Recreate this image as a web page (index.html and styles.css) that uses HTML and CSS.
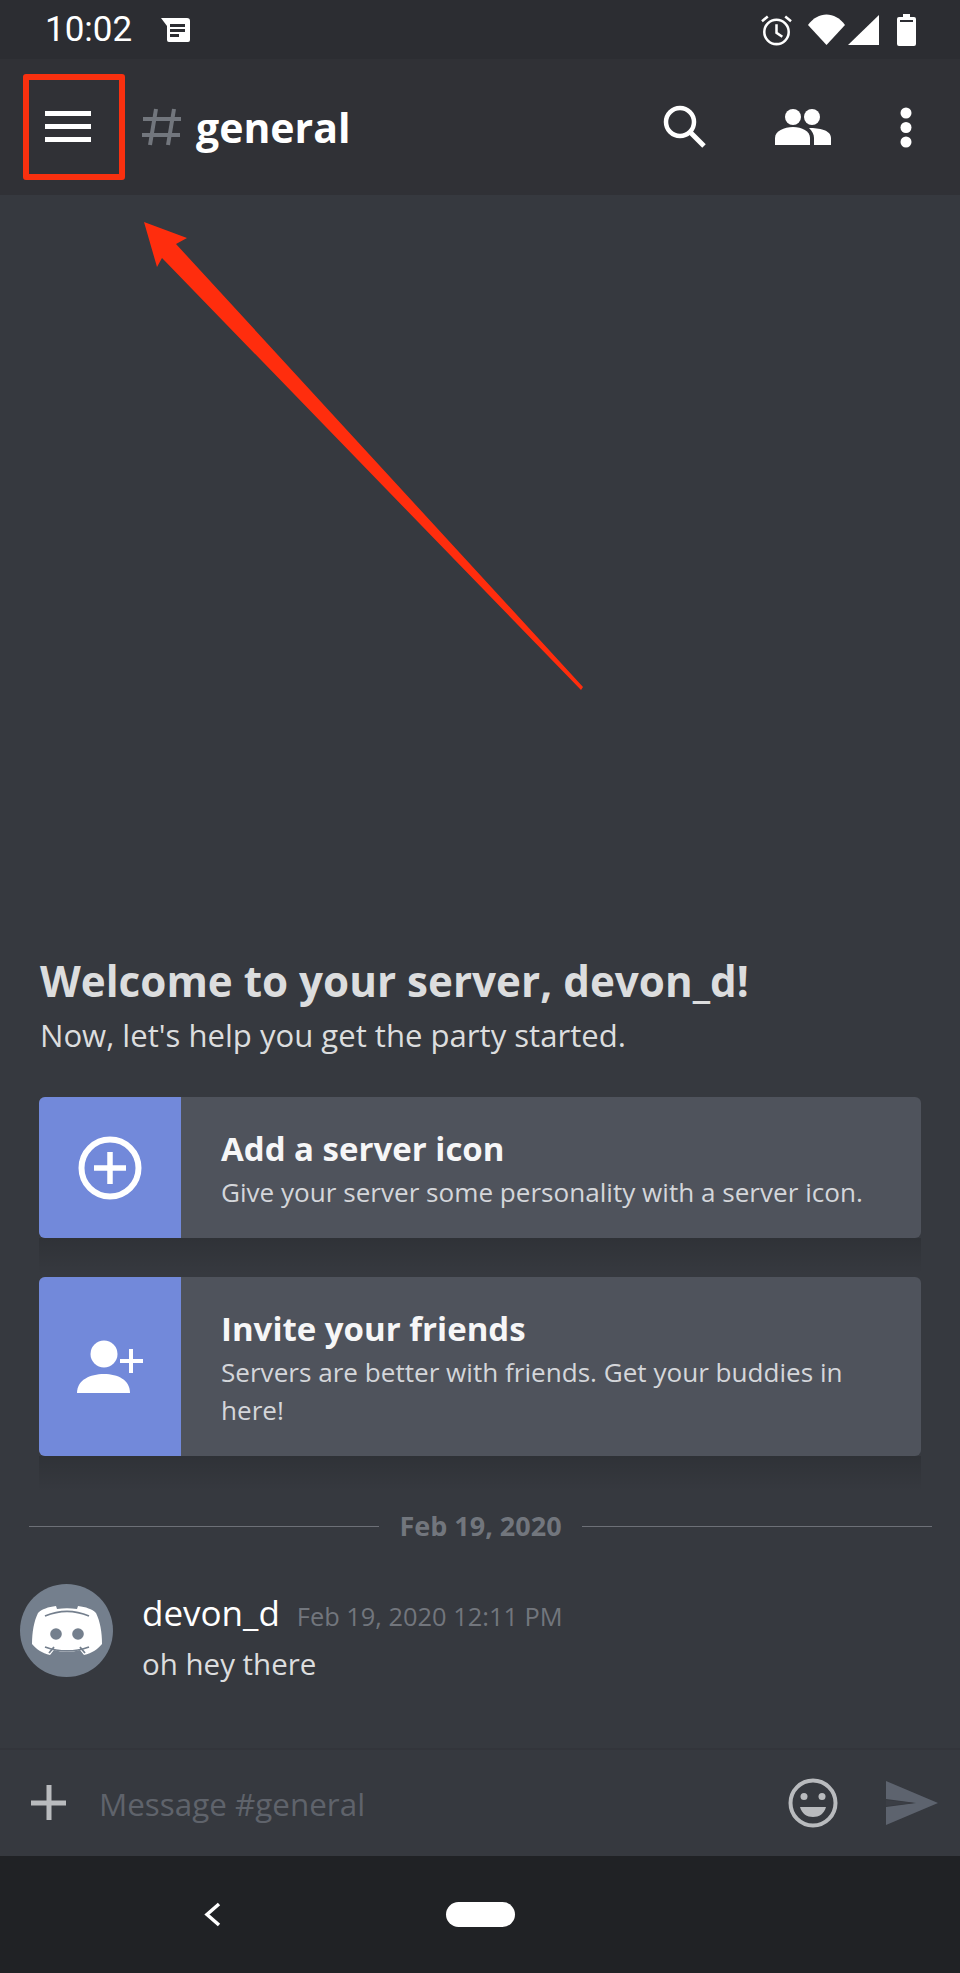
FILE: index.html
```html
<!DOCTYPE html>
<html lang="en">
<head>
    <meta charset="UTF-8">
    <title>general</title>
    <link rel="stylesheet" href="styles.css">
</head>
<body>

<div class="status-bar">
    <span class="clock">10:02</span>
    <svg class="note-icon" width="32" height="26" viewBox="0 0 32 26"><path fill="#fff" d="M2 1h26a3 3 0 0 1 3 3v19a2 2 0 0 1-2 2H10a2 2 0 0 1-2-2V9z"/><path fill="#2c2d32" d="M11 7h15v3H11zM11 12h15v3H11zM11 17h9v3h-9z"/></svg>
    <span class="spacer"></span>
    <svg width="31" height="33" viewBox="0 0 32 33"><g fill="none" stroke="#fff" stroke-width="2.6"><circle cx="16" cy="19" r="12.600"/><path d="M16 11v9l6 4M1 8l6-5M31 8l-6-5"/></g></svg>
    <svg class="wifi-icon" width="37" height="31" viewBox="0 0 37 31"><path fill="#fff" d="M0 11C10 -3 27 -3 37 11L18.500 31z"/></svg>
    <svg class="signal-icon" width="31" height="30" viewBox="0 0 31 30"><path fill="#fff" d="M31 0v30H0z"/></svg>
    <svg class="battery-icon" width="19" height="32" viewBox="0 0 19 32"><path fill="#fff" d="M6 0h7v3h4a2 2 0 0 1 2 2v25a2 2 0 0 1-2 2H2a2 2 0 0 1-2-2V5a2 2 0 0 1 2-2h4z"/><path fill="#2c2d32" d="M3 6h13v2H3z"/></svg>
</div>

<header class="top-bar">
    <button class="menu-btn">
        <svg width="46" height="32" viewBox="0 0 46 32"><path fill="#fff" d="M0 0h46v5H0zM0 13h46v5H0zM0 26h46v5H0z"/></svg>
    </button>
    <svg class="hash" width="40" height="40" viewBox="0 0 40 40"><path fill="none" stroke="#72767d" stroke-width="4" d="M14 2L8 38M32 2L26 38M1 12h38M0 28h38"/></svg>
    <h1>general</h1>
    <span class="spacer"></span>
    <svg class="bar-icon" width="44" height="44" viewBox="0 0 44 44"><circle cx="18" cy="17" r="14" fill="none" stroke="#fff" stroke-width="4.500"/><path stroke="#fff" stroke-width="5" d="M28 27l14 14"/></svg>
    <svg class="bar-icon" width="56" height="36" viewBox="0 0 56 36"><g fill="#fff"><circle cx="18" cy="8" r="8"/><circle cx="37" cy="8" r="8"/><path d="M0 36v-7c0-7 9-11 18-11s17 4 17 11v7z"/><path d="M39 36v-7c0-4-2-7-5-10 10 0 22 2 22 10v7z"/></g></svg>
    <svg class="bar-icon" width="12" height="41" viewBox="0 0 12 41"><g fill="#fff"><circle cx="6" cy="6" r="5.500"/><circle cx="6" cy="20.500" r="5.500"/><circle cx="6" cy="35" r="5.500"/></g></svg>
</header>

<main class="chat">
    <h2>Welcome to your server, devon_d!</h2>
    <p class="welcome-sub">Now, let's help you get the party started.</p>

    <div class="card-wrap">
        <div class="card card-one">
            <div class="card-icon">
                <svg width="64" height="64" viewBox="0 0 64 64"><circle cx="32" cy="32" r="28.500" fill="none" stroke="#fff" stroke-width="6"/><path stroke="#fff" stroke-width="5.500" d="M16 32h32M32 16v32"/></svg>
            </div>
            <div class="card-text">
                <h3>Add a server icon</h3>
                <p>Give your server some personality with a server icon.</p>
            </div>
        </div>
    </div>

    <div class="card-wrap">
        <div class="card card-two">
            <div class="card-icon">
                <svg width="66" height="54" viewBox="0 0 66 54"><g fill="#fff"><circle cx="27" cy="14" r="13.500"/><path d="M0 53c0-13 13-19 27-19s26 6 26 19z"/></g><path stroke="#fff" stroke-width="4" d="M43 21h23M54 9v24"/></svg>
            </div>
            <div class="card-text">
                <h3>Invite your friends</h3>
                <p>Servers are better with friends. Get your buddies in here!</p>
            </div>
        </div>
    </div>

    <div class="date-divider"><span>Feb 19, 2020</span></div>

    <div class="message">
        <div class="avatar">
            <svg width="70" height="50" viewBox="0 0 70 50"><path fill="#fff" d="M24 0C16 1 10 3 6 7 2 15 0 26 0 38c4 5 10 9 18 11l4-5c4 1 9 2 13 2s9-1 13-2l4 5c8-2 14-6 18-11 0-12-2-23-6-31-4-4-10-6-18-7l-1 3c-7-1-13-1-20 0z"/><circle cx="24" cy="28" r="5.800" fill="#747f8d"/><circle cx="46" cy="28" r="5.800" fill="#747f8d"/><path fill="none" stroke="#747f8d" stroke-width="1.800" d="M13 10c14-6 30-6 44 0M13 41c14 5 30 5 44 0M17 47l5-6M53 47l-5-6"/></svg>
        </div>
        <div class="message-body">
            <div class="message-head"><span class="username">devon_d</span><span class="timestamp">Feb 19, 2020 12:11 PM</span></div>
            <div class="message-text">oh hey there</div>
        </div>
    </div>
</main>

<div class="input-bar">
    <svg width="36" height="36" viewBox="0 0 36 36"><path stroke="#b9bbbe" stroke-width="5" d="M0 18h35M18 0v35"/></svg>
    <span class="placeholder">Message #general</span>
    <span class="spacer"></span>
    <svg width="50" height="50" viewBox="0 0 50 50"><circle cx="25" cy="25" r="22.500" fill="none" stroke="#b9bbbe" stroke-width="4"/><circle cx="16" cy="18.500" r="3.500" fill="#b9bbbe"/><circle cx="34" cy="18.500" r="3.500" fill="#b9bbbe"/><path fill="#b9bbbe" d="M12 29h26c-2 7-7 10-13 10s-11-3-13-10z"/></svg>
    <svg class="send" width="52" height="44" viewBox="0 0 52 44"><path fill="#5d636e" d="M0 0l52 22L0 44V26l30-4L0 18z"/><path fill="#3b3e45" d="M0 19l28 3-28 3z"/></svg>
</div>

<nav class="nav-bar">
    <svg width="17" height="25" viewBox="0 0 17 25"><path fill="none" stroke="#fff" stroke-width="3.500" d="M15 2L3 12.500 15 23"/></svg>
    <span class="nav-home"></span>
</nav>

<!-- annotations drawn on top of the screenshot -->
<div class="menu-highlight"></div>
<svg class="arrow" width="960" height="720" viewBox="0 0 960 720"><path fill="#ff2d0d" d="M144 222L187 238 176 244 583 687 581 690 162 258 157 267z"/></svg>

</body>
</html>
```

FILE: styles.css
```css
* {
    box-sizing: border-box;
}
html, body {
    margin: 0;
    padding: 0;
}
body {
    position: relative;
    width: 960px;
    height: 1973px;
    display: flex;
    flex-direction: column;
    font-family: "Open Sans", "Noto Sans", sans-serif;
    background-color: #36393f;
    color: #fff;
    overflow: hidden;
}
h1, h2, h3, p {
    margin: 0;
}
.spacer {
    flex: 1;
}

.status-bar {
    height: 59px;
    padding: 0 44px 0 45px;
    display: flex;
    align-items: center;
    background-color: #2c2d32;
}
.clock {
    font-family: Roboto, sans-serif;
    font-size: 35px;
    margin-right: 27px;
}
.wifi-icon {
    margin-left: 16px;
}
.signal-icon {
    margin-left: 3px;
}
.battery-icon {
    margin-left: 18px;
}

.top-bar {
    height: 136px;
    padding: 0 48px 0 45px;
    display: flex;
    align-items: center;
    background-color: #303136;
}
.menu-btn {
    padding: 0;
    border: none;
    background: none;
    display: flex;
    margin-right: 51px;
}
.hash {
    margin-right: 14px;
}
.top-bar h1 {
    font-size: 41px;
    font-weight: 700;
    color: #fff;
}
.bar-icon {
    margin-left: 69px;
}

.chat {
    flex: 1;
    padding-top: 761px;
    background-color: #36393f;
}
.chat h2 {
    margin: 0 40px;
    font-size: 42.2px;
    font-weight: 700;
    color: #dcddde;
    line-height: 50px;
    white-space: nowrap;
}
.welcome-sub {
    margin: 8px 40px 0;
    font-size: 31.1px;
    line-height: 42px;
    color: #dcddde;
}

/* the wrap carries the soft band of shadow under each card */
.card-wrap {
    margin: 3px 39px 0;
    padding-bottom: 36px;
    background: linear-gradient(rgba(0, 0, 0, 0.13), rgba(0, 0, 0, 0)) bottom / 100% 36px no-repeat;
}
.welcome-sub + .card-wrap {
    margin-top: 41px;
}
.card {
    display: flex;
    border-radius: 6px;
    overflow: hidden;
    background-color: #4f535c;
}
.card-one {
    height: 141px;
}
.card-two {
    height: 179px;
}
.card-icon {
    width: 142px;
    flex-shrink: 0;
    display: flex;
    align-items: center;
    justify-content: center;
    background-color: #7289da;
}
.card-text {
    flex: 1;
    padding: 3px 40px 0;
    display: flex;
    flex-direction: column;
    justify-content: center;
}
.card-text h3 {
    font-size: 33px;
    font-weight: 700;
    line-height: 42px;
    color: #f6f6f7;
}
.card-text p {
    margin-top: 3px;
    font-size: 26.1px;
    line-height: 38px;
    color: #d4d6da;
}

.date-divider {
    margin: 16px 28px 0 29px;
    display: flex;
    align-items: center;
    gap: 20px;
    font-size: 27px;
    font-weight: 700;
    color: #72767d;
    line-height: 36px;
}
.date-divider::before, .date-divider::after {
    content: "";
    flex: 1;
    height: 1px;
    background-color: #6d7077;
}

.message {
    margin-top: 40px;
    padding-left: 20px;
    display: flex;
}
.avatar {
    width: 93px;
    height: 93px;
    border-radius: 50%;
    background-color: #747f8d;
    display: flex;
    align-items: center;
    justify-content: center;
}
.message-body {
    margin-left: 29px;
    padding-top: 4px;
}
.message-head {
    display: flex;
    align-items: baseline;
}
.username {
    font-size: 35px;
    line-height: 50px;
}
.timestamp {
    margin-left: 17px;
    font-size: 25.4px;
    color: #72767d;
}
.message-text {
    margin-top: 3px;
    font-size: 29.5px;
    line-height: 46px;
    color: #dcddde;
}

.input-bar {
    height: 108px;
    padding: 0 22px 0 31px;
    display: flex;
    align-items: center;
    background-color: #36393f;
    border-top: 2px solid #33353b;
}
.placeholder {
    margin-left: 32px;
    font-size: 31.4px;
    color: #5f636b;
}
.send {
    margin-left: 48px;
}

.nav-bar {
    height: 117px;
    padding-left: 204px;
    display: flex;
    align-items: center;
    background-color: #202225;
}
.nav-home {
    margin-left: 225px;
    width: 69px;
    height: 25px;
    border-radius: 13px;
    background-color: #fff;
}

.menu-highlight {
    position: absolute;
    left: 23px;
    top: 74px;
    width: 102px;
    height: 106px;
    border: 6px solid #f9300f;
    border-radius: 3px;
}
.arrow {
    position: absolute;
    left: 0;
    top: 0;
}
```
